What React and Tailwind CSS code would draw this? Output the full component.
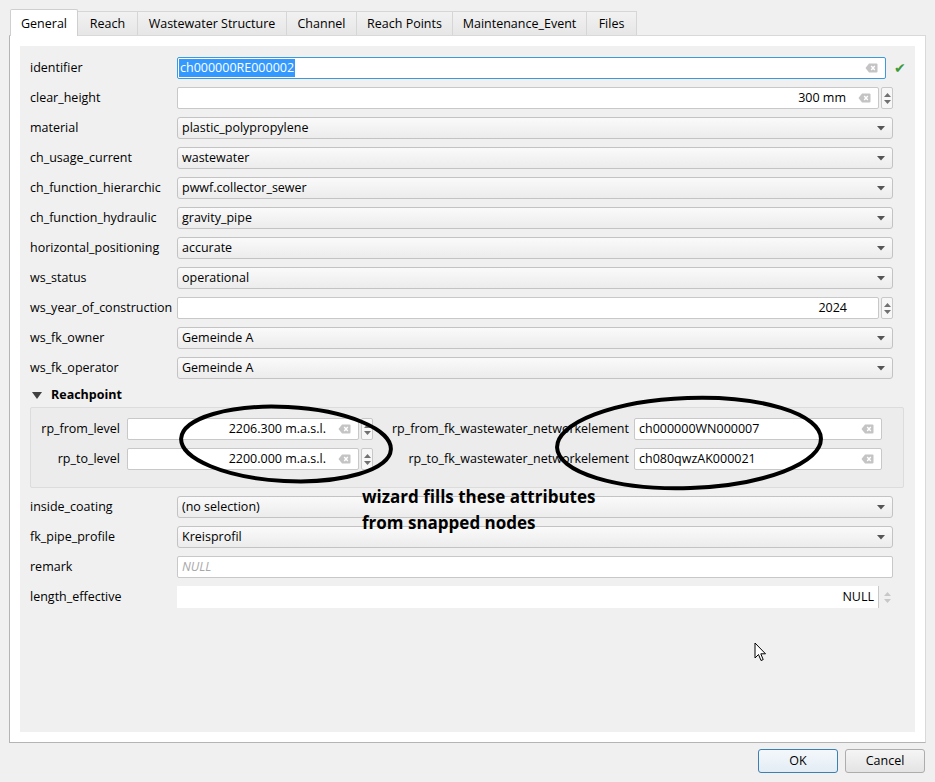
import React from 'react';

const FONT = { fontFamily: '"Open Sans", "Noto Sans", sans-serif' };

/* ─── little drawings ─────────────────────────────────────────── */
const ClearIcon = () => (
  <svg width="13" height="10" viewBox="0 0 13 10" className="shrink-0">
    <path d="M4 0.5 H11.5 A1 1 0 0 1 12.5 1.5 V8.5 A1 1 0 0 1 11.5 9.5 H4 L0.5 5 Z" fill="#c4c4c4" />
    <path d="M6.2 3 L9.8 7 M9.8 3 L6.2 7" stroke="#fff" strokeWidth="1.4" />
  </svg>
);

const ComboArrow = () => (
  <svg width="8" height="5" viewBox="0 0 8 5" className="shrink-0">
    <path d="M0 0 H8 L4 4.5 Z" fill="#555" />
  </svg>
);

const Spinner = ({ disabled }) => (
  <div className={`w-[12px] h-[22px] ml-[2px] shrink-0 flex flex-col items-center justify-center gap-[3px] rounded-[2px] ${disabled ? '' : 'border border-[#c8c8c8] bg-[#f7f7f7]'}`}>
    <svg width="7" height="4" viewBox="0 0 7 4"><path d="M0 4 H7 L3.5 0 Z" fill={disabled ? '#c8c8c8' : '#707070'} /></svg>
    <svg width="7" height="4" viewBox="0 0 7 4"><path d="M0 0 H7 L3.5 4 Z" fill={disabled ? '#c8c8c8' : '#707070'} /></svg>
  </div>
);

/* ─── widgets ─────────────────────────────────────────────────── */
const Combo = ({ value }) => (
  <div className="flex-1 h-[22px] flex items-center justify-between pl-[4px] pr-[7px] border border-[#c3c3c3] rounded-[3px] bg-gradient-to-b from-[#fafafa] to-[#ececec]">
    <span>{value}</span>
    <ComboArrow />
  </div>
);

const TextInput = ({ value, placeholder, clear }) => (
  <div className="flex-1 h-[22px] flex items-center justify-between pl-[4px] pr-[7px] border border-[#c8c8c8] rounded-[2px] bg-white">
    {placeholder ? <span className="italic text-[#a8a8a8]">{placeholder}</span> : <span>{value}</span>}
    {clear && <ClearIcon />}
  </div>
);

const SpinBox = ({ value }) => (
  <div className="flex-1 flex items-center">
    <div className="flex-1 h-[22px] flex items-center justify-end gap-[12px] pr-[7px] border border-[#c8c8c8] rounded-[2px] bg-white">
      <span>{value}</span>
      <ClearIcon />
    </div>
    <Spinner />
  </div>
);

const Row = ({ label, children, narrow = true }) => (
  <div className="flex items-center h-[22px]">
    <div className="w-[147px] shrink-0">{label}</div>
    <div className={`flex-1 flex items-center ${narrow ? 'mr-[12px]' : ''}`}>{children}</div>
  </div>
);

const tabs = [
  ['General', 'w-[68px]'],
  ['Reach', 'w-[60px]'],
  ['Wastewater Structure', 'w-[149px]'],
  ['Channel', 'w-[70px]'],
  ['Reach Points', 'w-[96px]'],
  ['Maintenance_Event', 'w-[134px]'],
  ['Files', 'w-[50px]'],
];

const combos = [
  ['material', 'plastic_polypropylene'],
  ['ch_usage_current', 'wastewater'],
  ['ch_function_hierarchic', 'pwwf.collector_sewer'],
  ['ch_function_hydraulic', 'gravity_pipe'],
  ['horizontal_positioning', 'accurate'],
  ['ws_status', 'operational'],
];

export default function App() {
  return (
    <div className="relative w-[935px] h-[782px] bg-[#f0f0f0] text-[12.5px] text-black overflow-hidden" style={FONT}>
      {/* Tab bar */}
      <div className="flex items-end pl-[10px] pt-[9px] h-[36px] relative z-10">
        {tabs.map(([t, w], i) =>
          i === 0 ? (
            <div key={t} className={`${w} h-[27px] pt-[3px] flex items-center justify-center bg-white border border-b-0 border-[#cfcfcf] rounded-t-[2px]`}>
              {t}
            </div>
          ) : (
            <div key={t} className={`${w} h-[24px] mb-[1px] pt-[2px] flex items-center justify-center bg-gradient-to-b from-[#f2f2f2] to-[#e6e6e6] border border-l-0 border-b-0 border-[#d6d6d6]`}>
              {t}
            </div>
          )
        )}
      </div>

      {/* Tab pane */}
      <div className="mx-[9px] -mt-[1px] h-[708px] bg-white border border-[#b4b4b4] border-t-[#d9d9d9] border-r-[#d9d9d9] p-[10px]">
        <div className="h-full bg-[#f0f0f0] pl-[10px] pr-[10px] pt-[11px] flex flex-col gap-[8px]">
          <Row label="identifier" narrow={false}>
            <div className="w-[709px] h-[22px] flex items-center justify-between pl-[1px] pr-[7px] border border-[#3c9ad8] rounded-[2px] bg-white">
              <span className="bg-[#3399ff] text-white px-[1px]">ch000000RE000002</span>
              <ClearIcon />
            </div>
            <span className="ml-[8px] text-[#3a9a3a] text-[14px] leading-none">✔</span>
          </Row>
          <Row label="clear_height">
            <SpinBox value="300 mm" />
          </Row>
          {combos.map(([l, v]) => (
            <Row key={l} label={l}>
              <Combo value={v} />
            </Row>
          ))}
          <Row label="ws_year_of_construction">
            <div className="flex-1 flex items-center">
              <div className="flex-1 h-[22px] flex items-center justify-end pr-[31px] border border-[#c8c8c8] rounded-[2px] bg-white">
                <span>2024</span>
              </div>
              <Spinner />
            </div>
          </Row>
          <Row label="ws_fk_owner">
            <Combo value="Gemeinde A" />
          </Row>
          <Row label="ws_fk_operator">
            <Combo value="Gemeinde A" />
          </Row>

          {/* Reachpoint group */}
          <div className="h-[16px] flex items-center gap-[9px] pl-[2px] -mb-[4px]">
            <svg width="10" height="7" viewBox="0 0 10 7"><path d="M0 0 H10 L5 7 Z" fill="#404040" /></svg>
            <span className="font-bold">Reachpoint</span>
          </div>
          <div className="mr-[1px] h-[81px] shrink-0 border border-[#dcdcdc] bg-[#ececec] rounded-[2px] pt-[10px] flex flex-col gap-[8px]">
            {[
              ['rp_from_level', '2206.300 m.a.s.l.', 'rp_from_fk_wastewater_networkelement', 'ch000000WN000007'],
              ['rp_to_level', '2200.000 m.a.s.l.', 'rp_to_fk_wastewater_networkelement', 'ch080qwzAK000021'],
            ].map(([l1, v1, l2, v2]) => (
              <div key={l1} className="flex items-center h-[22px]">
                <div className="w-[89px] text-right shrink-0">{l1}</div>
                <div className="w-[246px] ml-[7px] flex">
                  <SpinBox value={v1} />
                </div>
                <div className="w-[256px] text-right shrink-0">{l2}</div>
                <div className="w-[248px] ml-[5px] flex">
                  <TextInput value={v2} clear />
                </div>
              </div>
            ))}
          </div>

          <Row label="inside_coating">
            <Combo value="(no selection)" />
          </Row>
          <Row label="fk_pipe_profile">
            <Combo value="Kreisprofil" />
          </Row>
          <Row label="remark">
            <TextInput placeholder="NULL" />
          </Row>
          <Row label="length_effective">
            <div className="flex-1 flex items-center">
              <div className="flex-1 h-[22px] flex items-center justify-end pr-[4px] bg-white border-r border-[#c8c8c8]">
                <span>NULL</span>
              </div>
              <Spinner disabled />
            </div>
          </Row>
        </div>
      </div>

      {/* Dialog buttons */}
      <div className="flex justify-end gap-[7px] pr-[10px] pt-[6px]">
        <button className="w-[80px] h-[24px] border border-[#3c7fb1] rounded-[3px] bg-gradient-to-b from-[#f4f8fc] to-[#e3ecf4]">OK</button>
        <button className="w-[80px] h-[24px] border border-[#adadad] rounded-[3px] bg-gradient-to-b from-[#f5f5f5] to-[#e4e4e4]">Cancel</button>
      </div>

      {/* Annotation overlay */}
      <svg className="absolute left-0 top-0 pointer-events-none" width="935" height="782">
        <ellipse cx="286" cy="444" rx="105" ry="37" transform="rotate(3 286 444)" fill="none" stroke="#000" strokeWidth="4" />
        <ellipse cx="689" cy="443" rx="132" ry="45" transform="rotate(-2 689 443)" fill="none" stroke="#000" strokeWidth="4" />
      </svg>
      <div className="absolute left-[362px] top-[484px] font-bold text-[17px] leading-[26px] pointer-events-none">
        <div>wizard fills these attributes</div>
        <div>from snapped nodes</div>
      </div>

      {/* Mouse cursor */}
      <svg className="absolute left-[754px] top-[642px]" width="13" height="20" viewBox="0 0 13 20">
        <path d="M1 1 V16 L4.5 12.5 L7 18.5 L9.2 17.6 L6.8 11.8 H11.5 Z" fill="#fff" stroke="#000" strokeWidth="1" strokeLinejoin="round" />
      </svg>
    </div>
  );
}
